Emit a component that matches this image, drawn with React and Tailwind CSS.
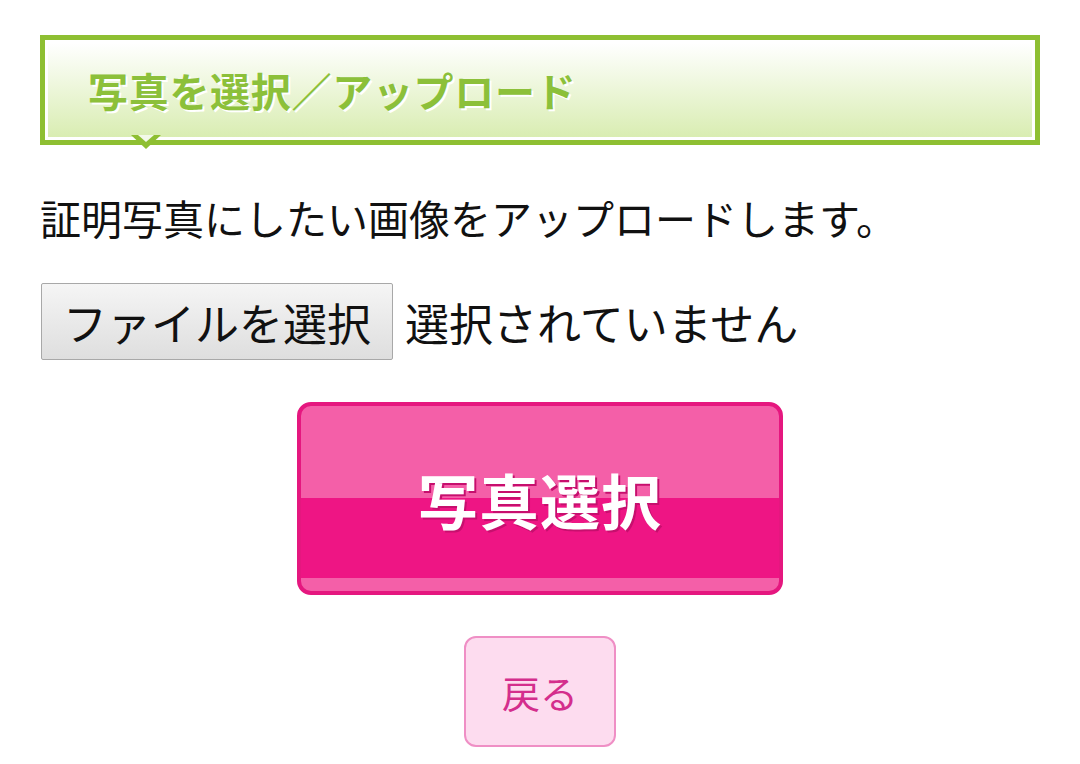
const jp = { fontFamily: '"Noto Sans CJK JP", "Noto Sans", sans-serif' };

function SectionHeader({ title }) {
  return (
    <div className="relative border-[5px] border-[#8ebf32]">
      <div className="h-[100px] border-[3px] border-white bg-[linear-gradient(#ffffff,#d9edb2)] flex items-center pl-[40px]">
        <h2 className="text-[40px] font-bold text-[#8cc03a] tracking-[0.7px] [text-shadow:2px_2px_0_#ffffff]">
          {title}
        </h2>
      </div>
      <svg
        className="absolute left-[86px] top-full -mt-[5px]"
        width="30"
        height="16"
        viewBox="0 0 30 16"
      >
        <polygon points="0,0 30,0 15,14" fill="#8ebf32" />
        <polygon points="7,0 23,0 15,7" fill="#f3f9e9" />
      </svg>
    </div>
  );
}

export default function App() {
  return (
    <div className="min-h-screen bg-white px-[40px] pt-[35px]" style={jp}>
      <SectionHeader title="写真を選択／アップロード" />

      <p className="mt-[44px] text-[41px] leading-[56px] text-[#111]">
        証明写真にしたい画像をアップロードします。
      </p>

      <div className="mt-[38px] flex items-center">
        <div className="h-[77px] ml-[1px] px-[21px] flex items-center border border-[#a8a8a8] rounded-[2px] bg-[linear-gradient(#f5f5f5,#dedede)] text-[44px] text-[#111]">
          ファイルを選択
        </div>
        <span className="ml-[12px] text-[44px] text-[#111]">選択されていません</span>
      </div>

      <div className="mt-[42px] flex justify-center">
        <button className="w-[486px] h-[193px] border-4 border-[#e5177f] rounded-[14px] bg-[linear-gradient(#f45fa8_0,#f45fa8_50%,#ee1584_50%,#ee1584_93%,#f45fa8_93%)] flex items-center justify-center">
          <span className="text-[60px] font-bold text-white tracking-[1px] [text-shadow:2px_2px_0_#c70f6e]">
            写真選択
          </span>
        </button>
      </div>

      <div className="mt-[41px] flex justify-center">
        <button className="w-[152px] h-[111px] border-2 border-[#ef8fc5] rounded-[12px] bg-[#fddcef] text-[38px] text-[#d42e8c]">
          戻る
        </button>
      </div>
    </div>
  );
}
